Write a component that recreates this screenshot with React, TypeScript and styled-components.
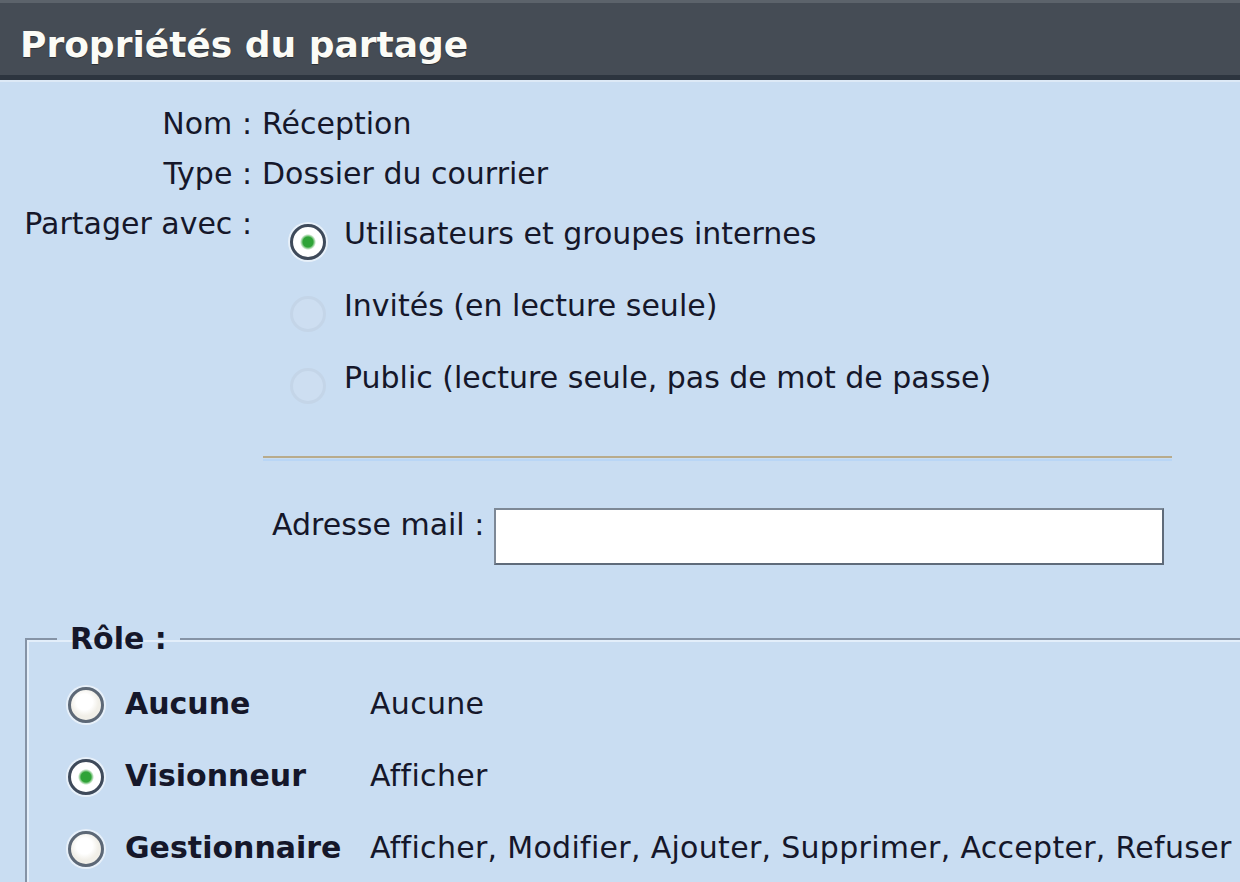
import React, { FC } from "react";
import styled, { createGlobalStyle } from "styled-components";

const GlobalStyle = createGlobalStyle`
  html, body {
    margin: 0;
    padding: 0;
    overflow: hidden;
    background: #c9ddf2;
  }
  body {
    font-family: "DejaVu Sans", Verdana, Tahoma, sans-serif;
    color: #15172a;
  }
`;

const Page = styled.div`
  width: 1240px;
  height: 882px;
  background: #c9ddf2;
`;

const Header = styled.div`
  box-sizing: border-box;
  height: 80px;
  display: flex;
  align-items: center;
  padding: 10px 20px 0;
  background: #454c55;
  border-top: 3px solid #5c636b;
  border-bottom: 5px solid #2d353f;
  box-shadow: 0 2px 0 #dde9f6;
`;

const Title = styled.h1`
  margin: 0;
  font-size: 36px;
  font-weight: bold;
  color: #fbfbf6;
  text-shadow: 0 1px 1px rgba(0, 0, 0, 0.4);
`;

const Body = styled.div`
  padding: 19px 0 0 17px;
`;

const InfoRow = styled.div`
  display: flex;
  align-items: flex-start;
  font-size: 30px;
  line-height: 50px;
`;

const InfoLabel = styled.span`
  width: 235px;
  flex: none;
  text-align: right;
  padding-right: 10px;
  white-space: nowrap;
`;

const InfoValue = styled.span``;

const Options = styled.div`
  display: flex;
  flex-direction: column;
  padding-left: 28px;
  margin-top: -1px;
`;

const OptionRow = styled.label`
  display: flex;
  align-items: center;
  gap: 18px;
  height: 72px;
  font-size: 30px;
  white-space: nowrap;
`;

const RadioDot = styled.span<{
  $checked?: boolean;
  $disabled?: boolean;
  $drop?: number;
}>`
  box-sizing: border-box;
  flex: none;
  width: 36px;
  height: 36px;
  border-radius: 50%;
  transform: translateY(${(p) => p.$drop ?? 0}px);
  border: 3px solid
    ${(p) => (p.$disabled ? "#c4d5e8" : p.$checked ? "#3f4a5a" : "#5d6876")};
  background: ${(p) =>
    p.$disabled
      ? "#cddef1"
      : p.$checked
      ? "radial-gradient(circle, #2fa337 0 5px, #7cc57f 6px, #ffffff 8px)"
      : "radial-gradient(circle at 45% 40%, #ffffff 0 8px, #f1efe8 14px)"};
  box-shadow: ${(p) =>
    p.$disabled ? "none" : "0 0 0 2px rgba(255, 255, 255, 0.55)"};
`;

const Separator = styled.hr`
  margin: 42px 68px 0 246px;
  border: none;
  height: 2px;
  background: #b8ab8c;
  box-shadow: 0 3px 0 #b9d6f6;
`;

const MailRow = styled.div`
  display: flex;
  align-items: flex-start;
  gap: 10px;
  margin: 50px 76px 0 255px;
`;

const MailLabel = styled.span`
  font-size: 30px;
  line-height: 34px;
  white-space: nowrap;
`;

const MailInput = styled.input`
  box-sizing: border-box;
  flex: 1;
  height: 57px;
  border: 2px solid #7d8896;
  border-right-color: #5f6b7a;
  border-bottom-color: #5f6b7a;
  background: #ffffff;
  outline: none;
  font: inherit;
  font-size: 28px;
  padding: 0 8px;
`;

const RoleSet = styled.fieldset`
  margin: 54px -60px 0 8px;
  padding: 0 0 0 41px;
  border: 2px solid #8593a6;
  border-right: none;
  box-shadow: inset 2px 2px 0 #e3eefa;
`;

const RoleLegend = styled.legend`
  margin-left: -11px;
  padding: 0 13px;
  font-size: 30px;
  font-weight: bold;
  line-height: 40px;
`;

const RoleRow = styled.label`
  display: flex;
  align-items: center;
  height: 72px;
  font-size: 30px;
  &:first-of-type {
    margin-top: 8px;
  }
`;

const RoleName = styled.span`
  width: 245px;
  flex: none;
  margin-left: 21px;
  font-weight: bold;
`;

const RoleDesc = styled.span`
  white-space: nowrap;
  letter-spacing: 0.3px;
`;

const shareOptions = [
  { label: "Utilisateurs et groupes internes", checked: true, disabled: false },
  { label: "Invités (en lecture seule)", checked: false, disabled: true },
  { label: "Public (lecture seule, pas de mot de passe)", checked: false, disabled: true },
];

const roles = [
  { name: "Aucune", desc: "Aucune", checked: false },
  { name: "Visionneur", desc: "Afficher", checked: true },
  {
    name: "Gestionnaire",
    desc: "Afficher, Modifier, Ajouter, Supprimer, Accepter, Refuser",
    checked: false,
  },
];

const App: FC = () => (
  <Page>
    <GlobalStyle />
    <Header>
      <Title>Propriétés du partage</Title>
    </Header>
    <Body>
      <InfoRow>
        <InfoLabel>Nom :</InfoLabel>
        <InfoValue>Réception</InfoValue>
      </InfoRow>
      <InfoRow>
        <InfoLabel>Type :</InfoLabel>
        <InfoValue>Dossier du courrier</InfoValue>
      </InfoRow>
      <InfoRow>
        <InfoLabel>Partager avec :</InfoLabel>
        <Options>
          {shareOptions.map((o) => (
            <OptionRow key={o.label}>
              <RadioDot $checked={o.checked} $disabled={o.disabled} $drop={8} />
              {o.label}
            </OptionRow>
          ))}
        </Options>
      </InfoRow>
      <Separator />
      <MailRow>
        <MailLabel>Adresse mail :</MailLabel>
        <MailInput type="text" />
      </MailRow>
      <RoleSet>
        <RoleLegend>Rôle :</RoleLegend>
        {roles.map((r) => (
          <RoleRow key={r.name}>
            <RadioDot $checked={r.checked} $drop={2} />
            <RoleName>{r.name}</RoleName>
            <RoleDesc>{r.desc}</RoleDesc>
          </RoleRow>
        ))}
      </RoleSet>
    </Body>
  </Page>
);

export default App;
